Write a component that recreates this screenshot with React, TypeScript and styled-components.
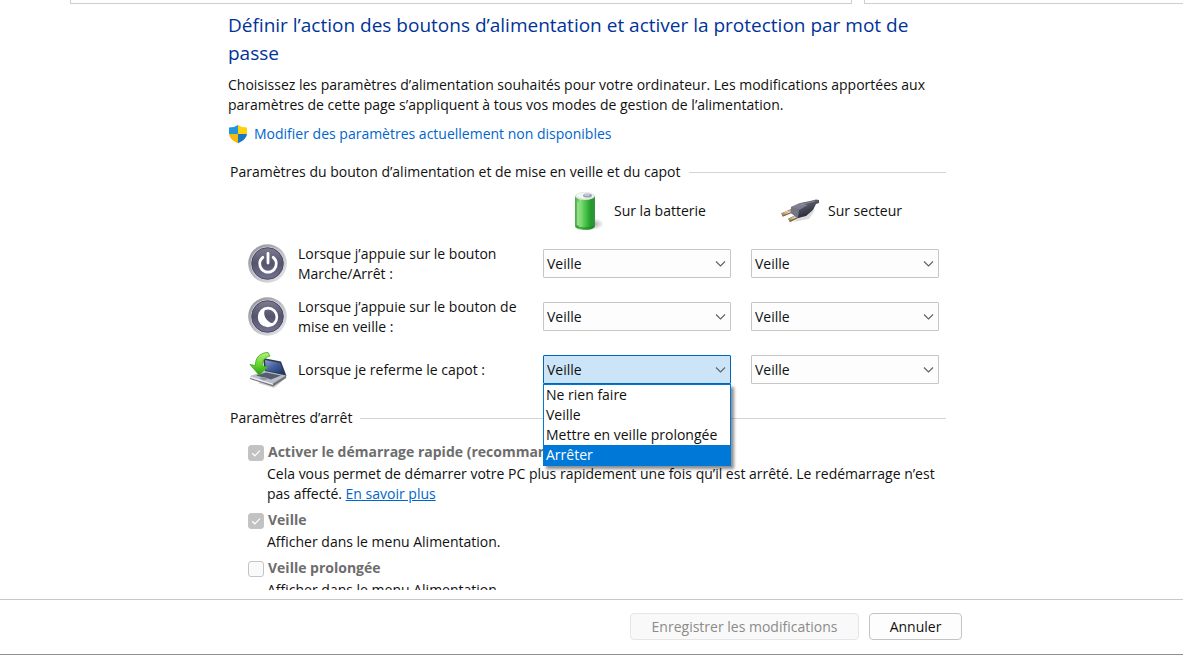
import React, { useState } from "react";
import styled, { createGlobalStyle } from "styled-components";

const GlobalStyle = createGlobalStyle`
  *, *::before, *::after { box-sizing: border-box; }
  body {
    margin: 0;
    background: #ffffff;
    color: #111111;
    font-family: "Open Sans", "Noto Sans", sans-serif;
    font-size: 14px;
    line-height: 20px;
  }
  button, select, input { font: inherit; color: inherit; }
`;

const Window = styled.div`
  display: flex;
  flex-direction: column;
  height: 100vh;
  padding-bottom: 10px;
  overflow: hidden;
`;

const TopBar = styled.header`
  display: flex;
  flex: none;
  gap: 12px;
  height: 4px;
  padding-left: 70px;
`;

const TopField = styled.div<{ $grow: number; $open?: boolean }>`
  flex: ${(p) => p.$grow} 1 0;
  border: 1px solid #cfcfcf;
  border-top: 0;
  ${(p) => p.$open && "border-right: 0;"}
`;

const Content = styled.main`
  flex: 1 1 0;
  min-height: 0;
  margin-bottom: 9px;
  padding: 7px 20px 0 228px;
  overflow: hidden;
`;

const Column = styled.div`
  max-width: 718px;
`;

const Title = styled.h1`
  margin: 0 0 8px;
  color: #003399;
  font-size: 19px;
  font-weight: 400;
  line-height: 28px;
`;

const Intro = styled.p`
  margin: 0 0 9px;
`;

const AdminLink = styled.a`
  display: flex;
  align-items: center;
  gap: 6px;
  width: fit-content;
  color: #0066cc;
  text-decoration: none;
`;

const Section = styled.section<{ $gap: number }>`
  margin-top: ${(p) => p.$gap}px;
`;

const SectionTitle = styled.h2`
  display: flex;
  align-items: center;
  gap: 8px;
  margin: 0;
  padding-left: 2px;
  font-size: 14px;
  font-weight: 400;
  line-height: 20px;

  &::after {
    content: "";
    flex: 1;
    height: 1px;
    background: #d5d5d5;
  }
`;

const SettingsGrid = styled.div`
  display: grid;
  grid-template-columns: 40px 235px 188px 188px;
  column-gap: 10px;
  grid-auto-rows: 53px;
  align-items: center;
  padding-left: 20px;
  padding-top: 2px;
`;

const SourceHeads = styled.div`
  display: grid;
  grid-template-columns: 188px 188px;
  column-gap: 20px;
  padding: 8px 0 0 315px;
`;

const SourceHead = styled.div`
  display: flex;
  align-items: center;
  gap: 8px;
  height: 42px;
  padding-left: 28px;
`;

const Setting = styled.div`
  display: grid;
  grid-template-columns: 40px 235px 188px 188px;
  align-items: center;
  height: 53px;
  padding-left: 20px;
`;

const SettingLabel = styled.span`
  padding-left: 10px;
`;

const Settings = styled.div`
  display: flex;
  flex-direction: column;
  padding-top: 5px;

  ${Setting} {
    grid-template-columns: 40px 255px 188px 188px;
    column-gap: 0;
  }
  ${Setting} > :last-child {
    margin-left: 20px;
    margin-right: -20px;
  }
`;

const PickerBox = styled.div`
  position: relative;
`;

const PickerSelect = styled.select<{ $open?: boolean }>`
  display: block;
  width: 100%;
  height: 29px;
  padding: 0 30px 0 3px;
  appearance: none;
  border: 1px solid ${(p) => (p.$open ? "#0067b8" : "#c6c6c6")};
  border-radius: 1px;
  background: ${(p) => (p.$open ? "#cce4f7" : "#fdfdfd")};
  outline: none;
`;

const PickerArrow = styled.svg`
  position: absolute;
  top: 11px;
  right: 5px;
  pointer-events: none;
`;

const OptionList = styled.ul`
  position: absolute;
  z-index: 2;
  top: 29px;
  left: 0;
  right: 0;
  margin: 0;
  padding: 0;
  border: 1px solid #0078d7;
  background: #ffffff;
  box-shadow: 3px 3px 3px rgba(0, 0, 0, 0.45);
  list-style: none;
`;

const Option = styled.li<{ $active: boolean }>`
  padding-left: 2px;
  white-space: nowrap;
  color: ${(p) => (p.$active ? "#ffffff" : "#111111")};
  background: ${(p) => (p.$active ? "#0078d7" : "transparent")};
`;

const Choice = styled.div`
  padding: 0 0 6px 20px;
`;

const ChoiceLabel = styled.label`
  display: flex;
  align-items: center;
  gap: 4px;
  width: fit-content;
  color: #6d6d6d;
  font-weight: 700;
  white-space: nowrap;
`;

const Tick = styled.input`
  flex: none;
  width: 16px;
  height: 16px;
  margin: 2px 0 0;
  appearance: none;
  border: 1px solid #c4c4c4;
  border-radius: 3px;
  background: #fafafa;

  &:checked {
    background: #c2c2c2
      url("data:image/svg+xml,%3Csvg xmlns='http://www.w3.org/2000/svg' viewBox='0 0 14 14'%3E%3Cpath d='M3.2 7.3 5.8 9.8 10.9 4.6' fill='none' stroke='white' stroke-width='1.2'/%3E%3C/svg%3E")
      center / 14px 14px no-repeat;
  }
`;

const ChoiceText = styled.p`
  margin: 2px 0 0;
  padding-left: 19px;
`;

const MoreLink = styled.a`
  color: #0066cc;
`;

const Footer = styled.footer`
  display: flex;
  flex: none;
  justify-content: flex-end;
  gap: 10px;
  height: 56px;
  padding: 13px 221px 0 20px;
  border-top: 1px solid #c8c8c8;
  border-bottom: 1px solid #8f8f8f;
`;

const Button = styled.button<{ $wide?: boolean }>`
  width: ${(p) => (p.$wide ? 229 : 93)}px;
  height: 27px;
  padding: 0;
  border: 1px solid #c3c3c3;
  border-radius: 4px;
  background: #fdfdfd;
  white-space: nowrap;

  &:disabled {
    border-color: #e6e6e6;
    background: #f9f9f9;
    color: #8b8b8b;
  }
`;

const ShieldIcon = () => (
  <svg width="20" height="20" viewBox="0 0 20 20" aria-hidden="true">
    <defs>
      <clipPath id="shield">
        <path d="M10 1C7.500 2.700 4.500 3.500 1 3.500V9c0 4.500 3.500 8 9 10.200C15.500 17 19 13.500 19 9V3.500C15.500 3.500 12.500 2.700 10 1z" />
      </clipPath>
    </defs>
    <g clipPath="url(#shield)">
      <rect width="10" height="10" fill="#2196d8" />
      <rect x="10" width="10" height="10" fill="#fdd20a" />
      <rect y="10" width="10" height="10" fill="#f6b910" />
      <rect x="10" y="10" width="10" height="10" fill="#1a76bd" />
    </g>
  </svg>
);

const BatteryIcon = () => (
  <svg width="35" height="42" viewBox="0 0 35 42" aria-hidden="true">
    <defs>
      <linearGradient id="cell">
        <stop offset="0" stopColor="#4aa64c" />
        <stop offset=".25" stopColor="#8be07e" />
        <stop offset=".5" stopColor="#4cc64a" />
        <stop offset=".8" stopColor="#219a2a" />
        <stop offset="1" stopColor="#3b8f42" />
      </linearGradient>
      <radialGradient id="cellShade">
        <stop offset="0" stopColor="#777" stopOpacity=".65" />
        <stop offset="1" stopColor="#999" stopOpacity="0" />
      </radialGradient>
    </defs>
    <ellipse cx="23" cy="34" rx="10" ry="6" fill="url(#cellShade)" />
    <path d="M4 6v30c0 2.500 4.500 4 10 4s10-1.500 10-4V6z" fill="url(#cell)" />
    <path d="M5 35c2 3 16 3 18 0v2c-2 3-16 3-18 0z" fill="#217e2b" opacity=".6" />
    <ellipse cx="14" cy="6" rx="10" ry="4" fill="#d9e6dc" />
    <ellipse cx="14" cy="5.500" rx="8.500" ry="3" fill="#f4f6f5" />
    <ellipse cx="16.500" cy="5.500" rx="4.500" ry="2" fill="#a09eb4" />
    <ellipse cx="16" cy="4.700" rx="3" ry="1.200" fill="#c8c6d6" />
    <path d="M7 12v23" stroke="#b4f1a5" strokeWidth="2" opacity=".5" />
  </svg>
);

const PlugIcon = () => (
  <svg width="41" height="30" viewBox="0 0 41 30" aria-hidden="true">
    <defs>
      <linearGradient id="plug" x1="0" y1="0" x2=".5" y2="1">
        <stop offset="0" stopColor="#92939f" />
        <stop offset=".45" stopColor="#555664" />
        <stop offset="1" stopColor="#252633" />
      </linearGradient>
      <linearGradient id="prong" x1="0" y1="1" x2="1" y2="0">
        <stop offset="0" stopColor="#ad8446" />
        <stop offset=".5" stopColor="#e6cfaa" />
        <stop offset="1" stopColor="#805f3d" />
      </linearGradient>
    </defs>
    <path d="M14 26 30 23 36 14 22 20z" fill="#888" opacity=".3" />
    <path d="M3 19 15 14" stroke="#765f51" strokeWidth="4" />
    <path d="M3 18.500 15 13.500" stroke="url(#prong)" strokeWidth="2.500" />
    <path d="M10 24.500 21 19" stroke="#6c6449" strokeWidth="4" />
    <path d="M10 24 21 18.500" stroke="url(#prong)" strokeWidth="2.500" />
    <path d="M12 11 21 7 31 5 37 3.500 40 4 40 7 37 8 34 14 27 20 19 22 12 17z" fill="url(#plug)" />
    <path d="M12 11 20 14 19 22 12 17z" fill="#747585" />
    <path d="M12 11 21 7 29 9 20 14z" fill="#8d8e9d" opacity=".7" />
    <path d="M22 8.500 36 5" stroke="#a5a6b2" strokeWidth="1" opacity=".6" />
  </svg>
);

const Dial = ({ id, children }: { id: string; children: React.ReactNode }) => (
  <svg width="40" height="40" viewBox="0 0 40 40" aria-hidden="true">
    <defs>
      <linearGradient id={id + "Rim"} x1="0" y1="0" x2="1" y2="1">
        <stop offset="0" stopColor="#8b8b92" />
        <stop offset=".45" stopColor="#b8b8be" />
        <stop offset="1" stopColor="#ececef" />
      </linearGradient>
      <linearGradient id={id + "Face"} x1="0" y1="0" x2="0" y2="1">
        <stop offset="0" stopColor="#7c7b90" />
        <stop offset=".5" stopColor="#55546d" />
        <stop offset="1" stopColor="#747391" />
      </linearGradient>
    </defs>
    <circle cx="19.500" cy="19.500" r="19.300" fill={`url(#${id}Rim)`} />
    <circle cx="19.500" cy="19.500" r="16.800" fill="#d4d4dc" />
    <circle cx="19.500" cy="19.500" r="15.800" fill={`url(#${id}Face)`} stroke="#4b4a60" strokeWidth="1" />
    {children}
  </svg>
);

const PowerIcon = () => (
  <Dial id="power">
    <path d="M14.800 13.300a8.300 8.300 0 1 0 10.400 0" fill="none" stroke="#fff" strokeWidth="2.800" strokeLinecap="round" />
    <path d="M20 9.500v9.500" stroke="#fff" strokeWidth="2.800" strokeLinecap="round" />
  </Dial>
);

const SleepIcon = () => (
  <Dial id="sleep">
    <circle cx="20" cy="20" r="8.900" fill="none" stroke="#fff" strokeWidth="2.600" />
    <path d="M17.500 11.500C10 13 8 25 15 28c3.500 1.500 8 1 10-1.500C18 25 14 17 17.500 11.500z" fill="#fff" />
  </Dial>
);

const LidIcon = () => (
  <svg width="40" height="40" viewBox="0 0 40 40" aria-hidden="true">
    <defs>
      <linearGradient id="screen" x1="0" y1="0" x2="1" y2="1">
        <stop offset="0" stopColor="#8ba2d1" />
        <stop offset=".45" stopColor="#45619d" />
        <stop offset="1" stopColor="#182f64" />
      </linearGradient>
      <linearGradient id="arrow" x1="0" y1="0" x2="0" y2="1">
        <stop offset="0" stopColor="#b5ef72" />
        <stop offset=".55" stopColor="#61d52b" />
        <stop offset="1" stopColor="#2b9c18" />
      </linearGradient>
    </defs>
    <path d="M10 33 26 38 39 27 34 23z" fill="#777" opacity=".35" />
    <path d="M15 8 33 11.500 38.500 26 17 22z" fill="#30384e" />
    <path d="M17 10 32 13 36.500 24 18 20.500z" fill="url(#screen)" />
    <path d="M2 26 17 21 38 25.500 25 33.500z" fill="#b9bdc6" />
    <path d="M8 25.500 18 22.500 33 25.500 23 29.500z" fill="#535c71" />
    <path d="M2 26 25 33.500 38 25.500V28L25 36.500 2 29z" fill="#70747f" />
    <path d="M2 26 25 33.500V35L2 28z" fill="#eceef2" />
    <path d="M11 28.500 16 27l5 1.500-5 2z" fill="#8f95a2" />
    <path
      d="M20 2.500C12 2.500 7 8 7.500 15.500L2 14.500 11 25 20 17l-5-.500C14 11 16 7.500 22 6z"
      fill="url(#arrow)"
      stroke="#3ca51f"
      strokeWidth=".8"
    />
  </svg>
);

const ACTIONS = ["Ne rien faire", "Veille", "Mettre en veille prolongée", "Arrêter"];

interface PickerProps {
  label: string;
  open?: boolean;
}

const Picker = ({ label, open }: PickerProps) => {
  const [value, setValue] = useState("Veille");
  const [expanded, setExpanded] = useState(!!open);
  const [active, setActive] = useState("Arrêter");
  return (
    <PickerBox>
      <PickerSelect
        aria-label={label}
        $open={expanded}
        value={value}
        onChange={(e) => setValue(e.target.value)}
      >
        {ACTIONS.map((a) => (
          <option key={a}>{a}</option>
        ))}
      </PickerSelect>
      <PickerArrow width="11" height="8" viewBox="0 0 11 8" aria-hidden="true">
        <path d="M1 1.500 5.500 6 10 1.500" fill="none" stroke="#5c6066" strokeWidth="1.100" />
      </PickerArrow>
      {expanded && (
        <OptionList role="listbox" aria-label={label}>
          {ACTIONS.map((a) => (
            <Option
              key={a}
              role="option"
              aria-selected={a === active}
              $active={a === active}
              onMouseEnter={() => setActive(a)}
              onClick={() => {
                setValue(a);
                setExpanded(false);
              }}
            >
              {a}
            </Option>
          ))}
        </OptionList>
      )}
    </PickerBox>
  );
};

const SETTINGS = [
  { icon: <PowerIcon />, label: "Lorsque j’appuie sur le bouton Marche/Arrêt :" },
  { icon: <SleepIcon />, label: "Lorsque j’appuie sur le bouton de mise en veille :" },
  { icon: <LidIcon />, label: "Lorsque je referme le capot :", open: true },
];

export default function App() {
  return (
    <>
      <GlobalStyle />
      <Window>
        <TopBar>
          <TopField $grow={782} />
          <TopField $grow={319} $open />
        </TopBar>
        <Content>
          <Column>
            <Title>
              Définir l’action des boutons d’alimentation et activer la protection par mot de passe
            </Title>
            <Intro>
              Choisissez les paramètres d’alimentation souhaités pour votre ordinateur. Les
              modifications apportées aux paramètres de cette page s’appliquent à tous vos modes de
              gestion de l’alimentation.
            </Intro>
            <AdminLink href="#admin">
              <ShieldIcon />
              Modifier des paramètres actuellement non disponibles
            </AdminLink>

            <Section $gap={18}>
              <SectionTitle>
                Paramètres du bouton d’alimentation et de mise en veille et du capot
              </SectionTitle>
              <SourceHeads>
                <SourceHead>
                  <BatteryIcon />
                  Sur la batterie
                </SourceHead>
                <SourceHead>
                  <PlugIcon />
                  Sur secteur
                </SourceHead>
              </SourceHeads>
              <Settings>
                {SETTINGS.map((s) => (
                  <Setting key={s.label}>
                    {s.icon}
                    <SettingLabel>{s.label}</SettingLabel>
                    <Picker label={`${s.label} Sur la batterie`} open={s.open} />
                    <Picker label={`${s.label} Sur secteur`} />
                  </Setting>
                ))}
              </Settings>
            </Section>

            <Section $gap={12}>
              <SectionTitle>Paramètres d’arrêt</SectionTitle>
              <Section $gap={14}>
                <Choice>
                  <ChoiceLabel>
                    <Tick type="checkbox" defaultChecked disabled />
                    Activer le démarrage rapide (recommandé)
                  </ChoiceLabel>
                  <ChoiceText>
                    Cela vous permet de démarrer votre PC plus rapidement une fois qu’il est arrêté.
                    Le redémarrage n’est pas affecté. <MoreLink href="#plus">En savoir plus</MoreLink>
                  </ChoiceText>
                </Choice>
                <Choice>
                  <ChoiceLabel>
                    <Tick type="checkbox" defaultChecked disabled />
                    Veille
                  </ChoiceLabel>
                  <ChoiceText>Afficher dans le menu Alimentation.</ChoiceText>
                </Choice>
                <Choice>
                  <ChoiceLabel>
                    <Tick type="checkbox" disabled />
                    Veille prolongée
                  </ChoiceLabel>
                  <ChoiceText>Afficher dans le menu Alimentation.</ChoiceText>
                </Choice>
              </Section>
            </Section>
          </Column>
        </Content>
        <Footer>
          <Button $wide disabled>
            Enregistrer les modifications
          </Button>
          <Button>Annuler</Button>
        </Footer>
      </Window>
    </>
  );
}
